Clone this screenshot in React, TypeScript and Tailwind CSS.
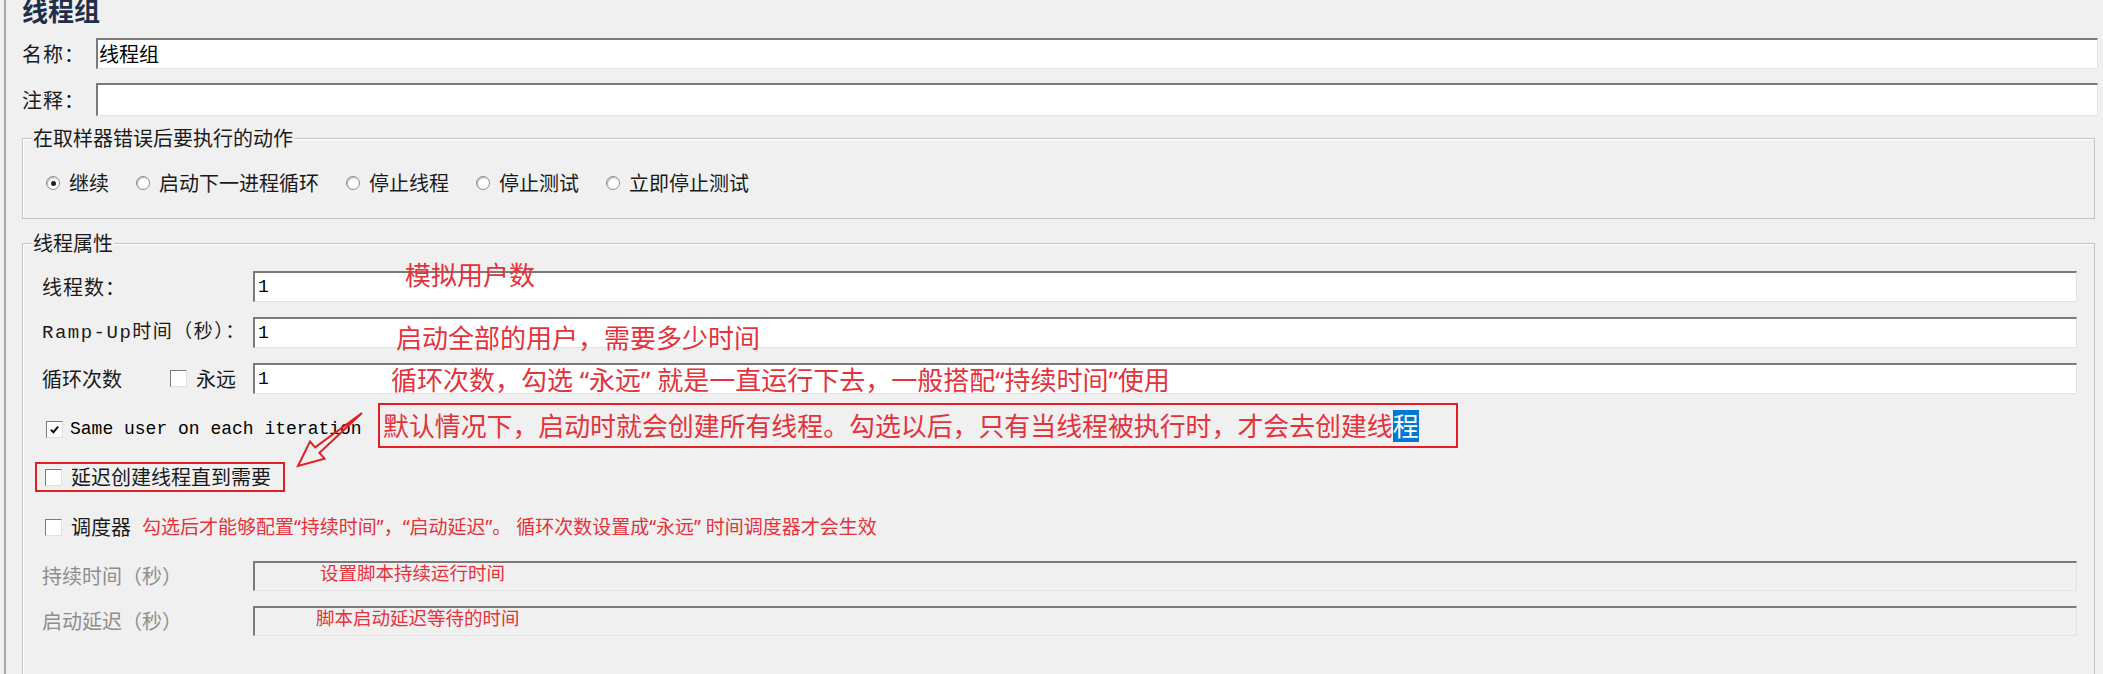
import type { ReactNode } from 'react'

const annot = "font-['Noto_Sans','Noto_Sans_CJK_SC',sans-serif] text-[#e5323b]"
const mono = "font-['Liberation_Mono','Noto_Sans_CJK_SC',monospace]"
const fieldBorder =
  'border-t-2 border-l-2 border-b border-r border-t-[#7a7a7a] border-l-[#7a7a7a] border-b-[#e3e3e3] border-r-[#e3e3e3]'

function Field({ children, disabled, className = '' }: { children?: ReactNode; disabled?: boolean; className?: string }) {
  return (
    <div className={`relative flex flex-1 ${fieldBorder} ${disabled ? 'bg-[#f0f0f0]' : 'bg-white'} ${className}`}>
      {children}
    </div>
  )
}

function Value({ v }: { v: string }) {
  return <span className={`${mono} pl-[3px] text-[18px] leading-[27px] text-black`}>{v}</span>
}

function Check({ checked }: { checked?: boolean }) {
  return (
    <span className="flex h-[17px] w-[17px] shrink-0 items-center justify-center border border-t-[#7a7a7a] border-l-[#7a7a7a] border-b-[#e0e0e0] border-r-[#e0e0e0] bg-white">
      {checked && (
        <svg viewBox="0 0 12 12" className="h-[11px] w-[11px]">
          <path d="M2 6.2 L4.8 9 L10 2.8" stroke="#111" strokeWidth="2.2" fill="none" />
        </svg>
      )}
    </span>
  )
}

function Radio({ on, label }: { on?: boolean; label: string }) {
  return (
    <div className="flex items-center gap-[9px]">
      <span className="flex h-[14px] w-[14px] items-center justify-center rounded-full border border-[#8c8c8c] bg-white shadow-[inset_1px_1px_1px_#b5b5b5]">
        {on && <span className="h-[5px] w-[5px] rounded-full bg-[#222]" />}
      </span>
      <span className="text-[20px] leading-[24px]">{label}</span>
    </div>
  )
}

export default function App() {
  return (
    <div className="relative h-[674px] w-full overflow-hidden bg-[#f0f0f0] font-['Noto_Sans_CJK_SC',sans-serif] text-[#1a1a1a]">
      <div className="ml-[4px] flex h-full flex-col border-l-2 border-[#a9a9a9] pl-[16px] pr-[5px]">
        <h1 className="-mt-[3px] h-[23px] text-[26px] font-bold leading-[26px] text-[#1f2f4a]">线程组</h1>

        {/* name / comment */}
        <div className="mt-[18px] flex items-center">
          <span className="w-[74px] text-[20px] leading-[24px] tracking-[1px]">名称：</span>
          <Field className="h-[31px] items-center">
            <span className="pl-[1px] text-[20px] leading-[24px] text-black">线程组</span>
          </Field>
        </div>
        <div className="mt-[14px] flex items-center">
          <span className="w-[74px] text-[20px] leading-[24px] tracking-[1px]">注释：</span>
          <Field className="h-[33px]" />
        </div>

        {/* sampler error action */}
        <div className="mr-[3px] mt-[22px] flex flex-col border border-[#c3c3c3] pb-[25px] shadow-[inset_1px_1px_0_#ffffff]">
          <span className="-mt-[12px] ml-[9px] self-start bg-[#f0f0f0] px-[1px] text-[20px] leading-[22px]">
            在取样器错误后要执行的动作
          </span>
          <div className="mt-[24px] flex h-[20px] items-center gap-[27px] pl-[23px]">
            <Radio on label="继续" />
            <Radio label="启动下一进程循环" />
            <Radio label="停止线程" />
            <Radio label="停止测试" />
            <Radio label="立即停止测试" />
          </div>
        </div>

        {/* thread properties */}
        <div className="mr-[3px] mt-[24px] flex flex-col border border-[#c3c3c3] pb-[60px] pl-[19px] pr-[17px] shadow-[inset_1px_1px_0_#ffffff]">
          <span className="-mt-[12px] -ml-[10px] self-start bg-[#f0f0f0] px-[1px] text-[20px] leading-[22px]">线程属性</span>

          <div className="mt-[17px] flex items-center">
            <span className="w-[211px] text-[20px] leading-[24px] tracking-[1px]">线程数：</span>
            <Field className="h-[31px] items-center">
              <Value v="1" />
              <span className={`${annot} absolute left-[150px] -top-[13px] whitespace-nowrap text-[26px] leading-[30px]`}>模拟用户数</span>
            </Field>
          </div>

          <div className="mt-[15px] flex items-center">
            <span className={`${mono} w-[211px] whitespace-nowrap text-[19px] leading-[24px] tracking-[1.5px]`}>Ramp-Up时间（秒）：</span>
            <Field className="h-[31px] items-center">
              <Value v="1" />
              <span className={`${annot} absolute left-[141px] top-[4px] whitespace-nowrap text-[26px] leading-[30px]`}>
                启动全部的用户，需要多少时间
              </span>
            </Field>
          </div>

          <div className="mt-[15px] flex items-center">
            <div className="flex w-[211px] items-center">
              <span className="w-[128px] text-[20px] leading-[24px]">循环次数</span>
              <Check />
              <span className="ml-[9px] text-[20px] leading-[24px]">永远</span>
            </div>
            <Field className="h-[31px] items-center">
              <Value v="1" />
              <span className={`${annot} absolute left-[136px] top-0 whitespace-nowrap text-[26px] leading-[30px]`}>
                循环次数，勾选 “永远” 就是一直运行下去，一般搭配“持续时间”使用
              </span>
            </Field>
          </div>

          <div className="mt-[9px] flex items-start">
            <div className="ml-[4px] mt-[16px] flex h-[20px] w-[332px] shrink-0 items-center gap-[7px]">
              <Check checked />
              <span className={`${mono} whitespace-nowrap text-[18px] leading-[22px] text-black`}>Same user on each iteration</span>
            </div>
            <div className={`${annot} flex h-[45px] items-center whitespace-nowrap border-2 border-[#e31e24] pl-[3px] pr-[37px] text-[25.9px] leading-[32px]`}>
              默认情况下，启动时就会创建所有线程。勾选以后，只有当线程被执行时，才会去创建线
              <span className="bg-[#0078d7] text-white">程</span>
            </div>
          </div>

          <div className="-ml-[7px] mt-[14px] flex h-[30px] items-center gap-[9px] self-start border-2 border-[#e31e24] pl-[8px] pr-[12px]">
            <Check />
            <span className="text-[20px] leading-[24px]">延迟创建线程直到需要</span>
          </div>

          <div className="ml-[3px] mt-[25px] flex h-[20px] items-center">
            <Check />
            <span className="ml-[9px] text-[20px] leading-[24px]">调度器</span>
            <span className={`${annot} ml-[11px] whitespace-nowrap text-[19px] leading-[24px]`}>
              勾选后才能够配置“持续时间”，“启动延迟”。 循环次数设置成“永远” 时间调度器才会生效
            </span>
          </div>

          <div className="mt-[24px] flex items-center">
            <span className="w-[211px] text-[20px] leading-[24px] text-[#8e8e8e]">持续时间（秒）</span>
            <Field disabled className="h-[30px] items-start pl-[65px]">
              <span className={`${annot} text-[18.5px] leading-[20px]`}>设置脚本持续运行时间</span>
            </Field>
          </div>

          <div className="mt-[15px] flex items-center">
            <span className="w-[211px] text-[20px] leading-[24px] text-[#8e8e8e]">启动延迟（秒）</span>
            <Field disabled className="h-[30px] items-start pl-[61px]">
              <span className={`${annot} text-[18.5px] leading-[20px]`}>脚本启动延迟等待的时间</span>
            </Field>
          </div>
        </div>
      </div>

      {/* hand-drawn arrow pointing at the delay option */}
      <svg className="pointer-events-none absolute left-[290px] top-[405px]" width="80" height="70" viewBox="0 0 80 70">
        <polygon
          points="72,8 29.5,47.8 34.6,53.6 8,61 20,36.6 25.1,42.4"
          fill="none"
          stroke="#e31e24"
          strokeWidth="2"
          strokeLinejoin="miter"
        />
      </svg>
    </div>
  )
}
